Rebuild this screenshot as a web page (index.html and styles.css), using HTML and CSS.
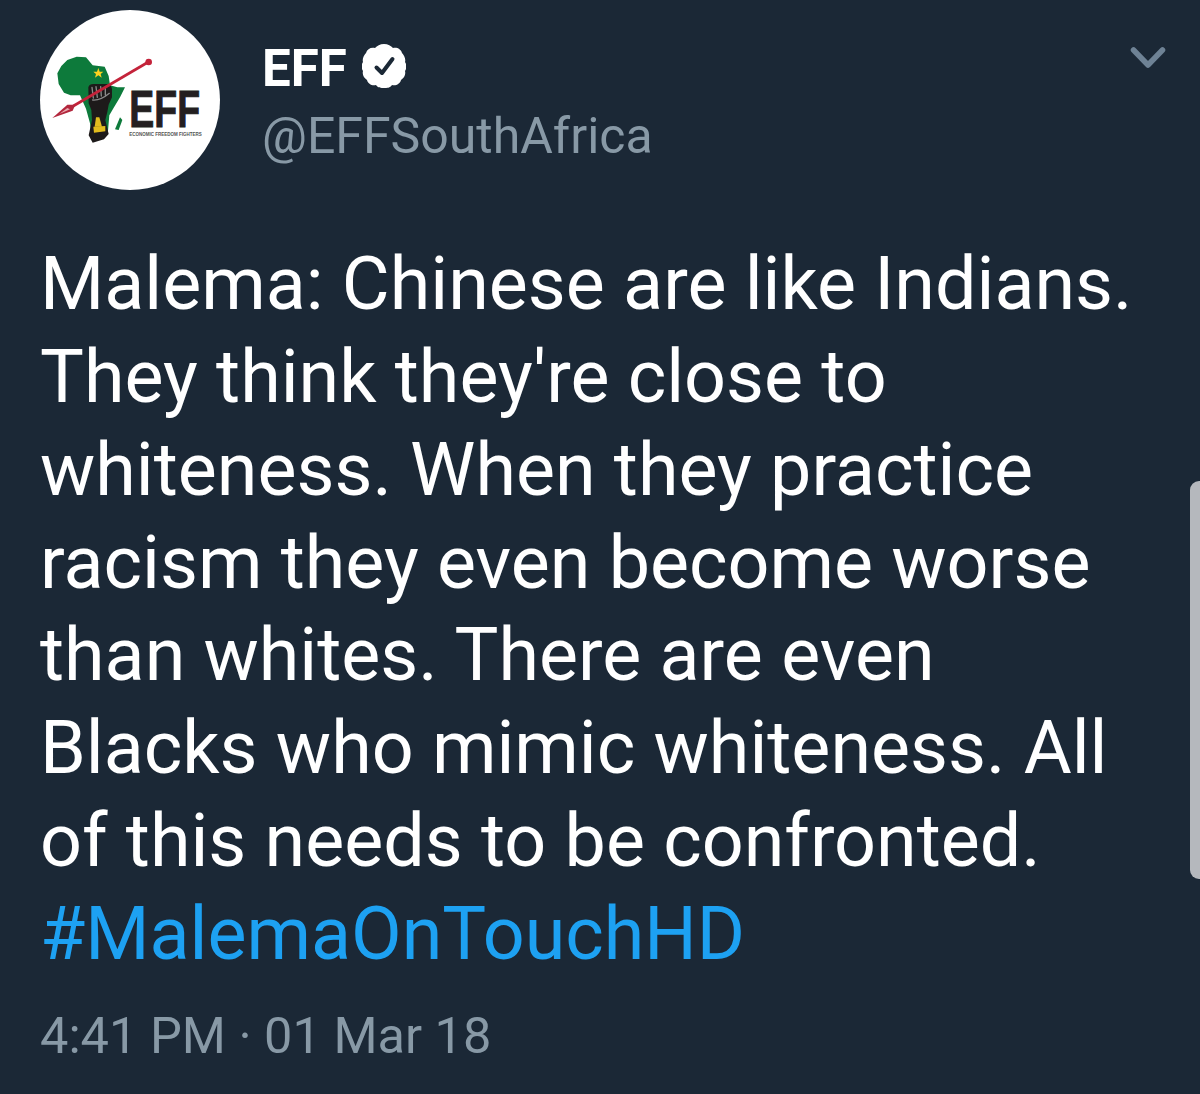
FILE: index.html
```html
<!DOCTYPE html>
<html lang="en">
<head>
<meta charset="utf-8">
<title>EFF tweet</title>
<link rel="stylesheet" href="styles.css">
</head>
<body>
<main class="tweet">
  <header class="head">
    <svg class="avatar" viewBox="30 0 540 540" aria-label="EFF logo">
      <circle cx="300" cy="270" r="270" fill="#fff"/>
      <path fill="#0d7a3b" d="M112 150 L140 140 L168 142 L188 166 L224 170 L236 198 L240 226 L262 232 L285 232 L270 262 L252 292 L238 316 L234 362 L212 386 L186 392 L180 340 L168 296 L150 256 L122 256 L102 248 L86 222 L82 190 L94 168 Z"/>
      <path fill="#0d7a3b" d="M270 322 L277 330 L266 360 L255 358 Z"/>
      <path fill="#1d1a1a" d="M175 232 Q178 222 190 222 L232 222 Q245 224 246 238 L246 262 L236 284 L232 306 L226 330 L236 372 L222 388 L188 398 L176 376 L186 330 L184 300 L176 280 Z"/>
      <path fill="#e3bd1e" d="M190 350 L226 348 L226 364 L192 368 Z"/>
      <path fill="#e3bd1e" d="M198 322 L208 322 L216 350 L194 350 Z"/>
      <path fill="none" stroke="#8a8a8a" stroke-width="4" stroke-linecap="round" d="M186 232 L190 264 M198 230 L202 262 M212 230 L214 258 M226 232 L226 256 M188 270 Q212 272 238 250"/>
      <path fill="#ffd21f" d="M205 174 L209 185 L220 185 L212 192 L215 203 L205 196 L195 203 L198 192 L190 185 L201 185 Z"/>
      <path fill="none" stroke="#c4233a" stroke-width="8" d="M130 288 L355 156"/>
      <circle cx="356" cy="156" r="10" fill="#c4233a"/>
      <path fill="#b3273d" d="M67 324 L112 284 L136 284 L128 302 Z"/>
      <path fill="#e9a9b0" d="M88 312 L112 294 L120 298 Z"/>
      <text class="logo-main" x="298" y="351" textLength="212" lengthAdjust="spacingAndGlyphs">EFF</text>
      <text class="logo-sub" x="298" y="378" textLength="217" lengthAdjust="spacingAndGlyphs">ECONOMIC FREEDOM FIGHTERS</text>
    </svg>
    <div class="who">
      <div class="name-row">
        <span class="name">EFF</span>
        <svg class="badge" viewBox="0 0 44 44" aria-label="Verified">
          <path fill="#fff" d="M22 0 C26 0 29 2 31 4 C35 3 39 5 40 9 C42 11 44 15 43 18 C45 21 45 24 43 27 C44 31 42 34 39 36 C38 40 34 42 30 41 C28 44 25 44 22 44 C19 44 16 44 14 41 C10 42 6 40 5 36 C2 34 0 31 1 27 C-1 24 -1 21 1 18 C0 15 2 11 4 9 C5 5 9 3 13 4 C15 2 18 0 22 0 Z"/>
          <path fill="none" stroke="#1b2836" stroke-width="4" stroke-linecap="round" stroke-linejoin="round" d="M14.5 23.5 L20 29 L30.5 15"/>
        </svg>
      </div>
      <div class="handle">@EFFSouthAfrica</div>
    </div>
    <svg class="chevron" viewBox="0 0 36 26" aria-hidden="true">
      <path fill="none" stroke="#6e8295" stroke-width="5.5" stroke-linecap="round" stroke-linejoin="round" d="M3.5 4 L18 19 L32.5 4"/>
    </svg>
  </header>
  <p class="body-text">Malema: Chinese are like Indians.<br>They think they're close to<br>whiteness. When they practice<br>racism they even become worse<br>than whites. There are even<br>Blacks who mimic whiteness. All<br>of this needs to be confronted.<br><a class="tag" href="#">#MalemaOnTouchHD</a></p>
  <p class="meta">4:41 PM · 01 Mar 18</p>
</main>
<div class="scroll-thumb"></div>
</body>
</html>
```

FILE: styles.css
```css
html, body {
  margin: 0;
  padding: 0;
  height: 1094px;
  overflow: hidden;
  background: #1b2836;
}
body {
  position: relative;
  font-family: Roboto, "Liberation Sans", sans-serif;
}
.tweet {
  padding: 10px 0 0 40px;
}
.head {
  display: flex;
  align-items: flex-start;
}
.avatar {
  width: 180px;
  height: 180px;
  flex: none;
}
.logo-main {
  font-family: "Liberation Sans", sans-serif;
  font-weight: 700;
  font-size: 155px;
  fill: #231f20;
  stroke: #231f20;
  stroke-width: 3px;
}
.logo-sub {
  font-family: "Liberation Sans", sans-serif;
  font-weight: 700;
  font-size: 15px;
  fill: #555;
}
.who {
  margin-left: 42px;
  padding-top: 29px;
  flex: 1;
}
.name-row {
  display: flex;
  align-items: center;
  height: 60px;
}
.name {
  font-size: 51px;
  font-weight: 700;
  color: #fff;
  line-height: 60px;
}
.badge {
  width: 44px;
  height: 44px;
  margin: 0 0 6px 15px;
}
.handle {
  font-size: 50px;
  line-height: 56px;
  padding-top: 9px;
  color: #8899a6;
}
.chevron {
  width: 36px;
  height: 26px;
  margin: 36px 34px 0 0;
  flex: none;
}
.body-text {
  margin: 48px 0 0;
  font-size: 73.6px;
  line-height: 92.85px;
  color: #fff;
  white-space: nowrap;
}
.tag {
  color: #1da1f2;
  text-decoration: none;
}
.meta {
  margin: 25px 0 0;
  font-size: 50.5px;
  line-height: 60px;
  color: #8899a6;
}
.scroll-thumb {
  position: absolute;
  right: 0;
  top: 481px;
  width: 10px;
  height: 398px;
  background: #b5b8bd;
  border-radius: 9px 0 0 9px;
}
```
